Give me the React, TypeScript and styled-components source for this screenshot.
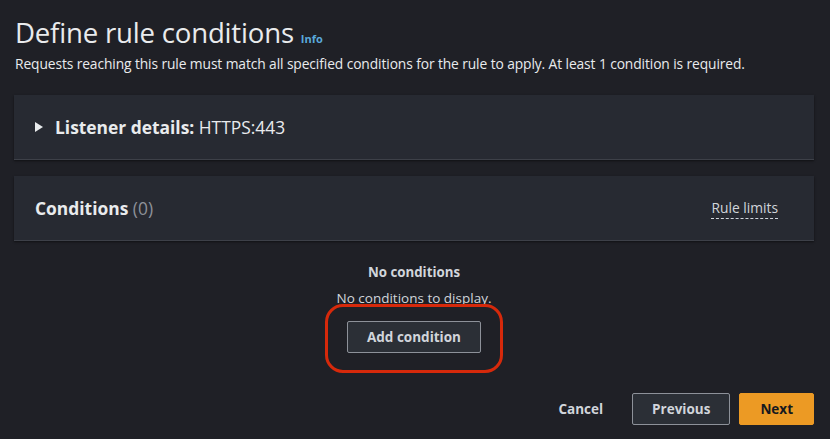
import React from 'react'
import styled, {createGlobalStyle} from 'styled-components'

const Global = createGlobalStyle`
  html, body {
    margin: 0;
    padding: 0;
    background: #1f2026;
  }
  body {
    font-family: "Open Sans", "Noto Sans", sans-serif;
    color: #e9ebed;
  }
`

const Page = styled.div`
  width: 830px;
  height: 439px;
  box-sizing: border-box;
  padding: 13px 16px 0 14px;
  display: flex;
  flex-direction: column;
  overflow: hidden;
`

const Header = styled.div`
  padding-left: 1px;
`

const TitleRow = styled.div`
  display: flex;
  align-items: baseline;
  gap: 7px;
`

const Title = styled.h1`
  margin: 0;
  font-size: 27.6px;
  font-weight: 400;
  line-height: 38px;
  letter-spacing: -0.2px;
  color: #e9ebed;
`

const InfoLink = styled.a`
  font-size: 11px;
  font-weight: 700;
  color: #5aa9db;
  text-decoration: none;
`

const Description = styled.p`
  margin: 3px 0 0;
  font-size: 13.8px;
  line-height: 20px;
  color: #e9ebed;
  letter-spacing: -0.1px;
`

const Panel = styled.section<{$height: number}>`
  height: ${p => p.$height}px;
  background: #272a32;
  border-bottom: 1px solid #3d4048;
  box-shadow: 0 1px 2px rgba(0, 0, 0, 0.5);
  box-sizing: border-box;
  display: flex;
  align-items: center;
  justify-content: space-between;
  padding: 0 36px 0 21px;
`

const Panels = styled.div`
  margin-top: 21px;
  display: flex;
  flex-direction: column;
  gap: 16px;
`

const PanelTitle = styled.h2`
  margin: 0;
  font-size: 17.4px;
  font-weight: 700;
  display: flex;
  align-items: center;
  gap: 12px;
  color: #e9ebed;
`

const Light = styled.span<{$muted?: boolean}>`
  font-weight: 400;
  color: ${p => (p.$muted ? '#8d9199' : '#e9ebed')};
`

const Caret = styled.svg`
  width: 8px;
  height: 10px;
  fill: #e9ebed;
`

const LimitsLink = styled.a`
  font-size: 13.8px;
  color: #d1d5db;
  text-decoration: none;
  border-bottom: 1px dashed #d1d5db;
  padding-bottom: 1px;
`

const Empty = styled.div`
  display: flex;
  flex-direction: column;
  align-items: center;
  margin-top: 20px;
`

const EmptyTitle = styled.div`
  font-size: 13.3px;
  font-weight: 700;
  line-height: 22px;
  color: #d1d5db;
`

const EmptyText = styled.div`
  margin-top: 5px;
  font-size: 13.5px;
  line-height: 20px;
  color: #d1d5db;
`

const Highlight = styled.div`
  margin-top: -4px;
  width: 178px;
  height: 69px;
  box-sizing: border-box;
  border: 3px solid #d6290b;
  border-radius: 18px;
  display: flex;
  align-items: center;
  justify-content: center;
  padding-bottom: 3px;
`

const Button = styled.button<{$primary?: boolean}>`
  height: 32px;
  box-sizing: border-box;
  padding: 0 ${p => (p.$primary ? 20 : 19)}px;
  font-family: inherit;
  font-size: 13.5px;
  font-weight: 700;
  border-radius: 2px;
  cursor: pointer;
  border: 1px solid ${p => (p.$primary ? '#ec9a24' : '#8d9199')};
  background: ${p => (p.$primary ? '#ec9a24' : '#2b2f36')};
  color: ${p => (p.$primary ? '#16191f' : '#d1d5db')};
`

const TextButton = styled.button`
  background: none;
  border: none;
  font-family: inherit;
  font-size: 13.5px;
  font-weight: 700;
  color: #d1d5db;
  padding: 0 20px;
  cursor: pointer;
`

const Footer = styled.div`
  margin-top: auto;
  margin-bottom: 14px;
  display: flex;
  justify-content: flex-end;
  align-items: center;
  gap: 9px;
`

export default function App() {
  return (
    <>
      <Global />
      <Page>
        <Header>
          <TitleRow>
            <Title>Define rule conditions</Title>
            <InfoLink>Info</InfoLink>
          </TitleRow>
          <Description>
            Requests reaching this rule must match all specified conditions for the rule to apply. At least 1 condition is required.
          </Description>
        </Header>
        <Panels>
          <Panel $height={65}>
            <PanelTitle>
              <Caret viewBox="0 0 8 10">
                <path d="M0 0 L8 5 L0 10 Z" />
              </Caret>
              <span>
                Listener details: <Light>HTTPS:443</Light>
              </span>
            </PanelTitle>
          </Panel>
          <Panel $height={65}>
            <PanelTitle>
              <span>
                Conditions <Light $muted>(0)</Light>
              </span>
            </PanelTitle>
            <LimitsLink>Rule limits</LimitsLink>
          </Panel>
        </Panels>
        <Empty>
          <EmptyTitle>No conditions</EmptyTitle>
          <EmptyText>No conditions to display.</EmptyText>
          <Highlight>
            <Button>Add condition</Button>
          </Highlight>
        </Empty>
        <Footer>
          <TextButton>Cancel</TextButton>
          <Button>Previous</Button>
          <Button $primary>Next</Button>
        </Footer>
      </Page>
    </>
  )
}
